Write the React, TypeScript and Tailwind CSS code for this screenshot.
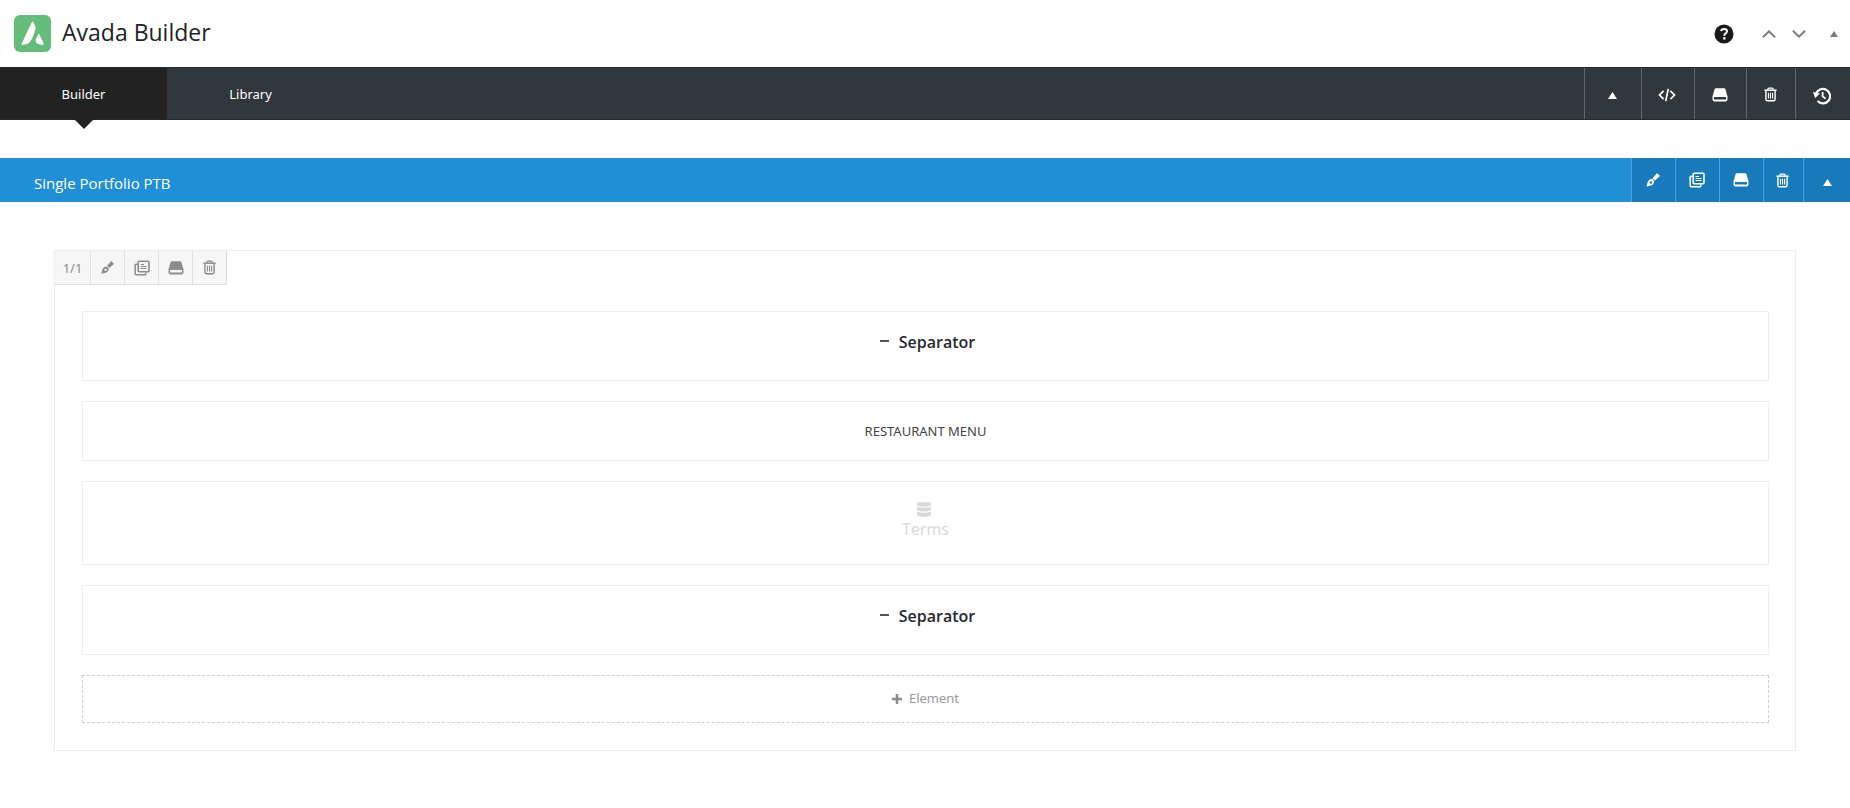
import React from 'react'

type IconProps = { className?: string }

function Logo() {
    return (
        <svg viewBox="0 0 37 37" className="size-[37px] shrink-0" aria-hidden="true">
            <rect width="37" height="37" rx="6" fill="#65bc7b" />
            <path d="M17.6 7.6 Q18.7 5.8 19.7 7.8 L21.8 13 Q20.6 17.5 18.6 22.4 Q16.8 27 14.2 28.4 Q11.8 29.7 7.2 29.8 Z" fill="#fff" />
            <path d="M24.9 18.4 Q27.4 22.8 30 29.7 Q25.3 30.2 23.2 28.6 Q20.9 26.8 22 23.8 Q22.9 21.4 24.9 18.4 Z" fill="#fff" />
        </svg>
    )
}

function Triangle({ className = '' }: IconProps) {
    return (
        <svg viewBox="0 0 8 7" preserveAspectRatio="none" className={className} fill="currentColor" aria-hidden="true">
            <path d="M4 0 L8 7 H0 Z" />
        </svg>
    )
}

function Drive({ className = '' }: IconProps) {
    return (
        <svg viewBox="0 0 16 16" className={className} fill="currentColor" aria-hidden="true">
            <path d="M3.8 1.2 H12.2 Q13.1 1.2 13.4 2 L15.3 9 H0.7 L2.6 2 Q2.9 1.2 3.8 1.2 Z" />
            <path fillRule="evenodd" d="M0.5 8.6 H15.5 V12.6 Q15.5 14.4 13.8 14.4 H2.2 Q0.5 14.4 0.5 12.6 Z M2 10 V12.4 H14 V10 Z" />
        </svg>
    )
}

function Trash({ className = '' }: IconProps) {
    return (
        <svg viewBox="0 0 16 16" className={className} fill="none" stroke="currentColor" aria-hidden="true">
            <path d="M1.5 3.4 H14.5" strokeWidth="1.6" />
            <path d="M5.2 3 V2.2 Q5.4 1.2 6.4 1.2 H9.6 Q10.6 1.2 10.8 2.2 V3" strokeWidth="1.3" />
            <path d="M3.1 4 V13 Q3.1 14.6 4.7 14.6 H11.3 Q12.9 14.6 12.9 13 V4" strokeWidth="1.5" />
            <path d="M5.8 6 V12.3 M8 6 V12.3 M10.2 6 V12.3" strokeWidth="1.2" />
        </svg>
    )
}

function Brush({ className = '' }: IconProps) {
    return (
        <svg viewBox="0 0 16 16" className={className} fill="currentColor" aria-hidden="true">
            <path d="M12.5 1.5 L14.6 3.6 Q14.8 4 14.4 4.4 L9.9 8.5 L7.6 6.2 L11.7 1.6 Q12.1 1.2 12.5 1.5 Z" />
            <path fillRule="evenodd" d="M7 6.8 L9.3 9.1 Q9.2 11.9 7.4 13 Q5.8 13.9 1.6 14.6 Q2.1 10.4 3.2 8.9 Q4.5 7 7 6.8 Z M5.9 9.2 A1.3 1.3 0 1 0 5.9 11.8 A1.3 1.3 0 1 0 5.9 9.2 Z" />
        </svg>
    )
}

function Clone({ className = '' }: IconProps) {
    return (
        <svg viewBox="0 0 16 16" className={className} fill="none" stroke="currentColor" aria-hidden="true">
            <rect x="4.2" y="1.2" width="10.8" height="10.6" rx="1" strokeWidth="1.6" />
            <path d="M3.5 4.2 H2 Q1.2 4.2 1.2 5 V13.8 Q1.2 14.8 2.2 14.8 H10.8 Q11.8 14.8 11.8 14 V12.5" strokeWidth="1.5" />
            <path d="M6.6 4.5 H10 M6.6 6.5 H12.6 M6.6 8.5 H12.6" strokeWidth="1.2" />
        </svg>
    )
}

function Code({ className = '' }: IconProps) {
    return (
        <svg viewBox="0 0 18 14" className={className} fill="none" stroke="currentColor" strokeWidth="1.7" aria-hidden="true">
            <path d="M5.6 2.8 L1.5 7 L5.6 11.2 M12.4 2.8 L16.5 7 L12.4 11.2 M10.3 0.8 L7.7 13.2" />
        </svg>
    )
}

function History({ className = '' }: IconProps) {
    return (
        <svg viewBox="0 0 18 18" className={className} fill="none" stroke="currentColor" aria-hidden="true">
            <path d="M3 7.2 A7.2 7.2 0 1 1 4.6 14" strokeWidth="2.2" />
            <path d="M0 5 L7 6.6 L2.2 11 Z" fill="currentColor" stroke="none" />
            <path d="M9.6 5 V9.3 L12.6 11.6" strokeWidth="1.8" />
        </svg>
    )
}

function Help({ className = '' }: IconProps) {
    return (
        <svg viewBox="0 0 20 20" className={className} aria-hidden="true">
            <circle cx="10" cy="10" r="9.5" fill="#1a1a1c" />
            <path d="M7.1 7.2 Q7.4 4.9 10.1 4.9 Q13 4.9 13 7.3 Q13 8.7 11.4 9.6 Q10.3 10.3 10.3 11.7" fill="none" stroke="#fff" strokeWidth="2" />
            <rect x="9.2" y="13.2" width="2.3" height="2.3" fill="#fff" />
        </svg>
    )
}

function Chevron({ className = '' }: IconProps) {
    return (
        <svg viewBox="0 0 14 8" className={className} fill="none" stroke="currentColor" strokeWidth="2" aria-hidden="true">
            <path d="M0.9 7.2 L7 1.4 L13.1 7.2" />
        </svg>
    )
}

function Database({ className = '' }: IconProps) {
    return (
        <svg viewBox="0 0 14 15" className={className} fill="currentColor" aria-hidden="true">
            <path d="M0 1.6 Q0 0.2 1.6 0.2 H12.4 Q14 0.2 14 1.6 V3.2 Q12.5 4.5 7 4.5 Q1.5 4.5 0 3.2 Z" />
            <path d="M0 4.8 Q2.5 5.8 7 5.8 Q11.5 5.8 14 4.8 V8.2 Q12.5 9.5 7 9.5 Q1.5 9.5 0 8.2 Z" />
            <path d="M0 9.8 Q2.5 10.8 7 10.8 Q11.5 10.8 14 9.8 V13 Q12.5 14.8 7 14.8 Q1.5 14.8 0 13 Z" />
        </svg>
    )
}

const mainButton = 'flex items-center justify-center border-l border-[#62676b] pr-0.5'
const containerButton = 'flex items-center justify-center border-l border-[#4ba3dc] bg-[#187abb] pr-0.5'
const columnButton = 'flex w-[34px] items-center justify-center border-r border-[#dedede]'

function Separator() {
    return (
        <div className="flex h-[70px] items-center justify-center border border-[#ededed] pb-2 pl-1">
            <span className="mr-2.5 mb-0.5 h-0.5 w-[9px] bg-[#555]"></span>
            <h3 className="font-['Open_Sans',sans-serif] text-base font-semibold text-[#26292c]">Separator</h3>
        </div>
    )
}

export default function App() {
    return (
        <div className="min-h-screen bg-white font-['Noto_Sans',sans-serif] text-[13px]">
            {/* Header */}
            <header className="flex h-[67px] items-center justify-between pl-3.5 pr-3">
                <div className="flex items-center gap-[11px]">
                    <Logo />
                    <h1 className="pb-0.5 font-['Open_Sans',sans-serif] text-[23px] text-[#1d2327]">Avada Builder</h1>
                </div>
                <div className="flex items-center text-[#787c82]">
                    <a href="#help" aria-label="Help" className="mr-7"><Help className="size-5" /></a>
                    <button aria-label="Move up" className="mr-4"><Chevron className="h-2 w-3.5" /></button>
                    <button aria-label="Move down" className="mr-6"><Chevron className="h-2 w-3.5 rotate-180" /></button>
                    <button aria-label="Toggle panel"><Triangle className="h-1.5 w-2" /></button>
                </div>
            </header>

            {/* Main toolbar */}
            <nav className="flex h-[53px] justify-between border-y border-[#25292d] bg-[#32373c] text-white">
                <div className="flex">
                    <a href="#builder" className="relative flex w-[167px] items-center justify-center bg-[#222] pt-0.5">
                        Builder
                        <svg viewBox="0 0 20 10" className="absolute top-full left-1/2 h-2.5 w-5 -translate-x-1/2" aria-hidden="true">
                            <path d="M0 0 H20 L10 10 Z" fill="#222" />
                        </svg>
                    </a>
                    <a href="#library" className="flex w-[167px] items-center justify-center pt-0.5">Library</a>
                </div>
                <div className="flex">
                    <button aria-label="Collapse all" className={`${mainButton} w-[57px]`}><Triangle className="mt-1 h-[7px] w-[9px]" /></button>
                    <button aria-label="Custom CSS" className={`${mainButton} w-[53px]`}><Code className="mt-0.5 h-3.5 w-[18px]" /></button>
                    <button aria-label="Save layout" className={`${mainButton} w-[52px]`}><Drive className="mt-0.5 size-4" /></button>
                    <button aria-label="Delete layout" className={`${mainButton} w-[49px]`}><Trash className="mt-0.5 size-[15px]" /></button>
                    <button aria-label="History" className={`${mainButton} w-[55px]`}><History className="mt-1 size-[18px]" /></button>
                </div>
            </nav>

            {/* Container */}
            <section className="mt-[38px]">
                <div className="flex h-11 justify-between bg-[#208fd6] text-white">
                    <h2 className="flex items-center pt-1.5 pl-[34px] font-['Open_Sans',sans-serif] text-[15px]">Single Portfolio PTB</h2>
                    <div className="flex">
                        <button aria-label="Edit container" className={`${containerButton} w-11`}><Brush className="size-4" /></button>
                        <button aria-label="Clone container" className={`${containerButton} w-11`}><Clone className="size-4" /></button>
                        <button aria-label="Save container" className={`${containerButton} w-11`}><Drive className="size-4" /></button>
                        <button aria-label="Delete container" className={`${containerButton} w-10`}><Trash className="size-[15px]" /></button>
                        <button aria-label="Collapse container" className="flex w-[47px] items-center justify-center border-l border-[#4ba3dc] bg-[#187abb]"><Triangle className="mt-1 h-[7px] w-[9px]" /></button>
                    </div>
                </div>

                {/* Column */}
                <div className="mx-[54px] mt-12 border border-[#ededed]">
                    <div className="flex">
                        <div className="flex h-[34px] border-b border-[#dedede] bg-[#f6f6f6] text-[#8c8c8c]">
                            <button className="w-9 border-r border-[#dedede] pt-0.5">1/1</button>
                            <button aria-label="Edit column" className={columnButton}><Brush className="size-[15px]" /></button>
                            <button aria-label="Clone column" className={columnButton}><Clone className="size-4" /></button>
                            <button aria-label="Save column" className={columnButton}><Drive className="size-4" /></button>
                            <button aria-label="Delete column" className={columnButton}><Trash className="size-[15px]" /></button>
                        </div>
                    </div>

                    <div className="flex flex-col gap-5 pt-[26px] pr-[26px] pb-[27px] pl-[27px]">
                        <Separator />
                        <div className="flex h-[60px] items-center justify-center border border-[#ededed] pt-0.5 text-[#444]">
                            RESTAURANT MENU
                        </div>
                        <div className="flex h-[84px] flex-col items-center border border-[#ededed] pt-5 text-[#d8d8d8]">
                            <Database className="mr-1 h-[15px] w-3.5" />
                            <span className="font-['Open_Sans',sans-serif] text-base leading-6">Terms</span>
                        </div>
                        <Separator />
                        <button className="flex h-12 items-center justify-center gap-[7px] border border-dashed border-[#cfcfcf] text-[#999]">
                            <svg viewBox="0 0 10 10" className="size-2.5" aria-hidden="true">
                                <path d="M5 0 V10 M0 5 H10" stroke="#8c8c8c" strokeWidth="2.6" />
                            </svg>
                            Element
                        </button>
                    </div>
                </div>
            </section>
        </div>
    )
}
